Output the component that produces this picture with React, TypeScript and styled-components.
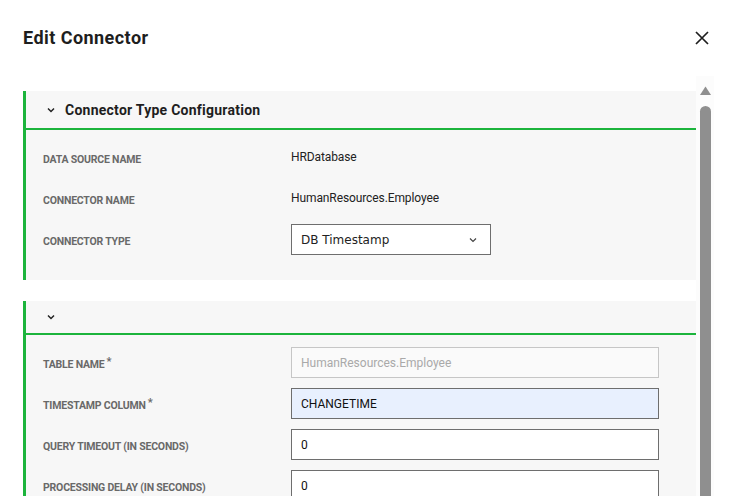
import React from 'react';
import styled, { createGlobalStyle } from 'styled-components';

const GlobalStyle = createGlobalStyle`
  html, body {
    margin: 0;
    padding: 0;
    overflow: hidden;
    background: #ffffff;
  }
  body {
    font-family: Roboto, "Liberation Sans", Arial, sans-serif;
    color: #222222;
  }
`;

const green = '#1cb43c';

const Modal = styled.div`
  padding: 0 23px;
  box-sizing: border-box;
  width: 737px;
`;

const ModalHeader = styled.div`
  height: 76px;
  display: flex;
  align-items: center;
  justify-content: space-between;
`;

const ModalTitle = styled.h2`
  margin: 0;
  font-size: 18px;
  font-weight: 700;
  letter-spacing: 0.45px;
  color: #1e1e1e;
  line-height: 24px;
`;

const CloseButton = styled.button`
  background: none;
  border: none;
  padding: 0;
  margin-right: 5px;
  width: 14px;
  height: 14px;
  display: flex;
  cursor: pointer;
`;

const ScrollArea = styled.div`
  height: 620px;
  display: flex;
`;

const ScrollContent = styled.div`
  flex: 1;
  min-width: 0;
  overflow: hidden;
  padding-top: 15px;
`;

const ScrollTrack = styled.div`
  width: 18px;
  flex: none;
  background: #fcfcfc;
  display: flex;
  flex-direction: column;
  align-items: center;
`;

const ScrollArrow = styled.div`
  height: 28px;
  display: flex;
  align-items: center;
  justify-content: center;
  padding-left: 1px;
`;

const ScrollThumb = styled.div`
  width: 11px;
  height: 440px;
  margin-top: 2px;
  margin-left: 1px;
  background: #8f8f8f;
  border-radius: 6px 6px 0 0;
`;

const Panel = styled.section`
  border-left: 3px solid ${green};
  background: #f7f7f7;
  margin-bottom: 21px;
`;

const PanelHeader = styled.div`
  display: flex;
  align-items: center;
  gap: 10px;
  padding: 8px 0 8px 21px;
  min-height: 16px;
  border-bottom: 2px solid ${green};
`;

const Chevron = styled.svg`
  width: 8px;
  height: 16px;
  flex: none;
`;

const PanelTitle = styled.h3`
  margin: 0;
  padding-top: 1px;
  font-size: 14px;
  font-weight: 700;
  letter-spacing: 0.25px;
  line-height: 20px;
  color: #1e1e1e;
`;

const PanelBody = styled.div`
  display: flex;
  flex-direction: column;
  gap: 10px;
  padding: 12px 0 25px 17px;
`;

const Row = styled.div`
  display: grid;
  grid-template-columns: 248px 1fr;
  align-items: center;
  height: 31px;
`;

const Label = styled.span`
  font-size: 10.5px;
  font-weight: 700;
  text-transform: uppercase;
  letter-spacing: -0.2px;
  color: #696969;
  padding-top: 4px;
`;

const Required = styled.sup`
  font-size: 11px;
  margin-left: 2px;
  vertical-align: 3px;
  line-height: 0;
`;

const Value = styled.span`
  font-size: 12px;
  color: #222222;
  letter-spacing: -0.1px;
  padding-bottom: 1px;
`;

const SelectBox = styled.div`
  width: 200px;
  height: 31px;
  box-sizing: border-box;
  border: 1px solid #6e6e6e;
  background: #ffffff;
  display: flex;
  align-items: center;
  justify-content: space-between;
  padding: 0 13px 0 9px;
  font-family: "DejaVu Sans", Verdana, sans-serif;
  font-size: 12px;
  color: #222222;
`;

type FieldVariant = 'disabled' | 'autofill' | 'normal';

const Input = styled.input<{ $variant: FieldVariant }>`
  width: 368px;
  height: 31px;
  box-sizing: border-box;
  padding: 0 9px;
  margin: 0;
  font-family: Roboto, "Liberation Sans", Arial, sans-serif;
  font-size: 12px;
  outline: none;
  border: 1px solid
    ${({ $variant }) => ($variant === 'disabled' ? '#c6c6c6' : '#6e6e6e')};
  background: ${({ $variant }) =>
    $variant === 'disabled' ? '#fafafa' : $variant === 'autofill' ? '#e8f0fe' : '#ffffff'};
  color: ${({ $variant }) => ($variant === 'disabled' ? '#a9a9a9' : '#111111')};

  &:disabled {
    opacity: 1;
  }
`;

const HeaderChevron = () => (
  <Chevron viewBox="0 0 8 16">
    <path d="M1 6.5l3 3 3-3" fill="none" stroke="#222" strokeWidth="1.5" />
  </Chevron>
);

const SelectChevron = () => (
  <svg width="8" height="6" viewBox="0 0 8 6">
    <path d="M1 1.5l3 3 3-3" fill="none" stroke="#444" strokeWidth="1.2" />
  </svg>
);

const fields: { label: string; value: string; required?: boolean; variant: FieldVariant }[] = [
  { label: 'Table Name', value: 'HumanResources.Employee', required: true, variant: 'disabled' },
  { label: 'Timestamp Column', value: 'CHANGETIME', required: true, variant: 'autofill' },
  { label: 'Query Timeout (in seconds)', value: '0', variant: 'normal' },
  { label: 'Processing Delay (in seconds)', value: '0', variant: 'normal' },
  { label: 'Polling Interval (in seconds)', value: '60', variant: 'normal' },
  { label: 'Batch Size', value: '1000', variant: 'normal' },
];

export default function App() {
  return (
    <>
      <GlobalStyle />
      <Modal>
        <ModalHeader>
          <ModalTitle>Edit Connector</ModalTitle>
          <CloseButton aria-label="Close">
            <svg width="14" height="14" viewBox="0 0 14 14">
              <path d="M1 1l12 12M13 1L1 13" stroke="#1e1e1e" strokeWidth="1.7" />
            </svg>
          </CloseButton>
        </ModalHeader>

        <ScrollArea>
          <ScrollContent>
            <Panel>
              <PanelHeader>
                <HeaderChevron />
                <PanelTitle>Connector Type Configuration</PanelTitle>
              </PanelHeader>
              <PanelBody>
                <Row>
                  <Label>Data Source Name</Label>
                  <Value>HRDatabase</Value>
                </Row>
                <Row>
                  <Label>Connector Name</Label>
                  <Value>HumanResources.Employee</Value>
                </Row>
                <Row>
                  <Label>Connector Type</Label>
                  <SelectBox>
                    <span>DB Timestamp</span>
                    <SelectChevron />
                  </SelectBox>
                </Row>
              </PanelBody>
            </Panel>

            <Panel>
              <PanelHeader>
                <HeaderChevron />
              </PanelHeader>
              <PanelBody>
                {fields.map((f) => (
                  <Row key={f.label}>
                    <Label>
                      {f.label}
                      {f.required && <Required>*</Required>}
                    </Label>
                    <Input
                      $variant={f.variant}
                      defaultValue={f.value}
                      disabled={f.variant === 'disabled'}
                    />
                  </Row>
                ))}
              </PanelBody>
            </Panel>
          </ScrollContent>

          <ScrollTrack>
            <ScrollArrow>
              <svg width="11" height="9" viewBox="0 0 11 9">
                <path d="M5.5 0.5L11 9H0z" fill="#8f8f8f" />
              </svg>
            </ScrollArrow>
            <ScrollThumb />
          </ScrollTrack>
        </ScrollArea>
      </Modal>
    </>
  );
}
